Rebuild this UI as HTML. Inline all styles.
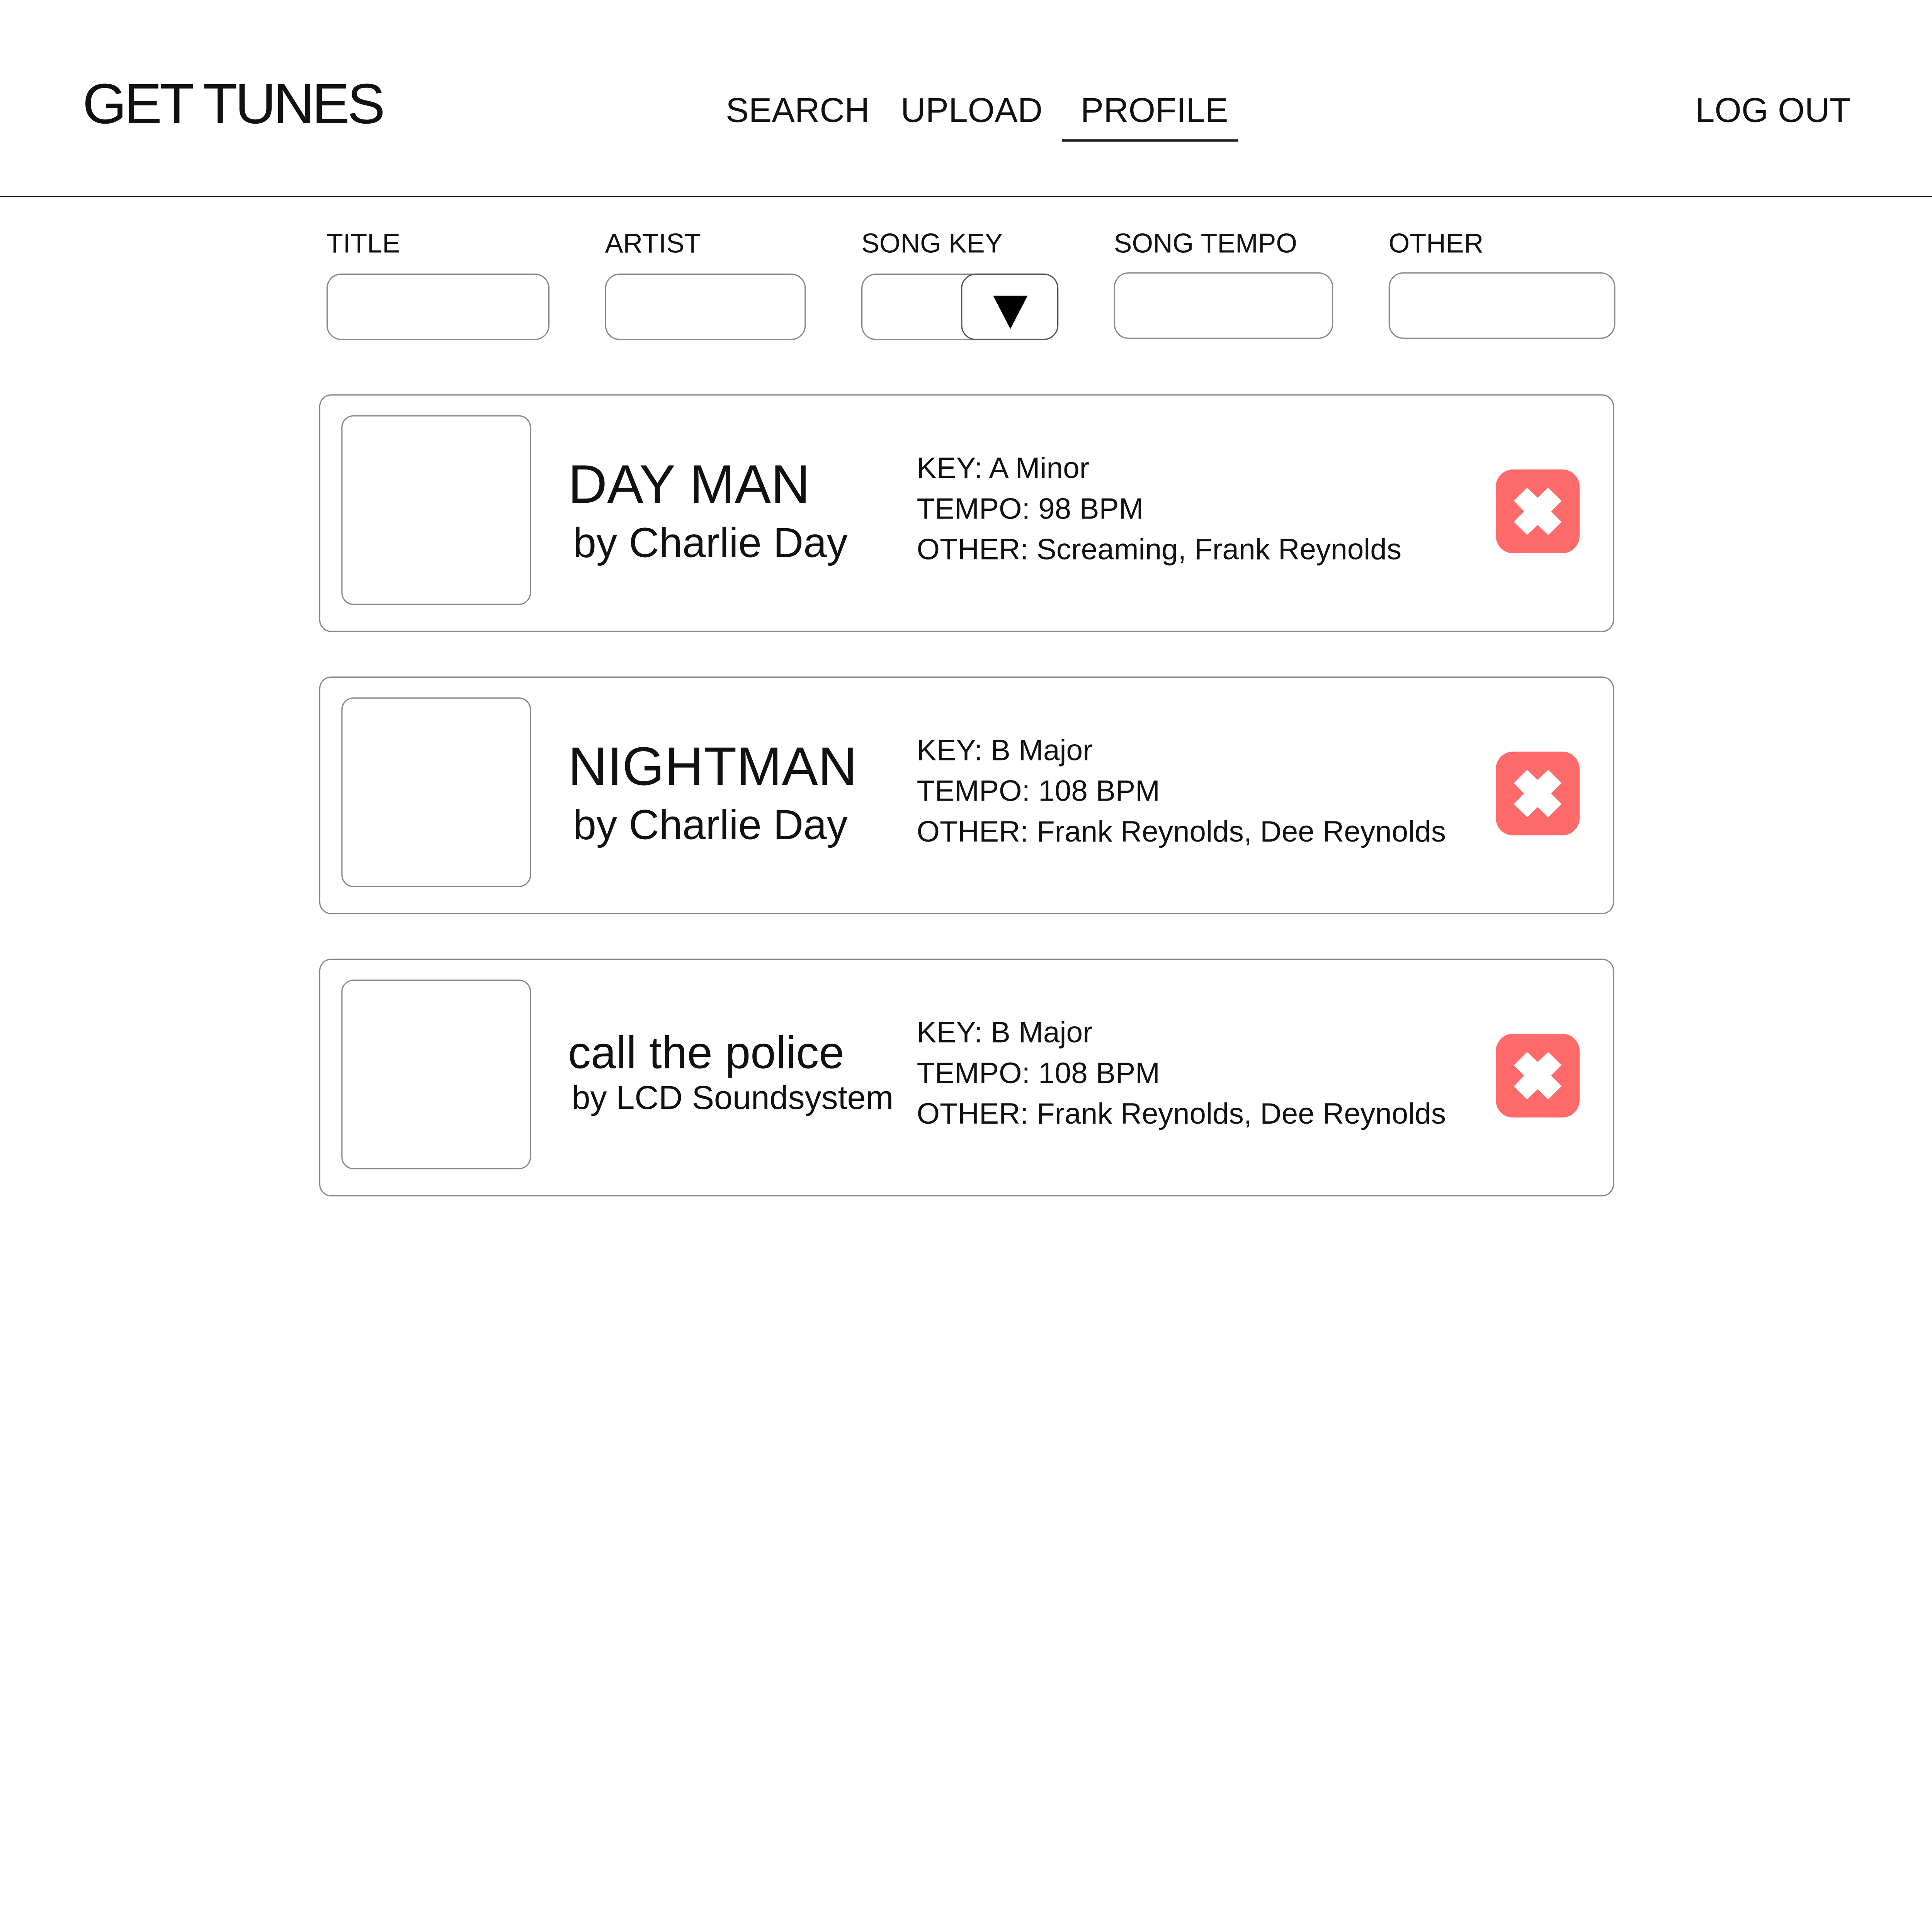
<!DOCTYPE html>
<html><head><meta charset="utf-8"><style>
html,body{margin:0;padding:0;background:#fff;overflow:hidden;width:100%;height:100%;}
#w{position:absolute;left:0;top:0;width:1568px;height:1510px;transform:scale(3.1888);transform-origin:0 0;font-family:"Liberation Sans",sans-serif;color:#111;}
.t{position:absolute;line-height:1;white-space:nowrap;}
.box{position:absolute;border:1.2px solid #888;border-radius:12px;box-sizing:border-box;background:#fff;}
.card{position:absolute;left:259px;width:1051px;height:193px;border:1.2px solid #888;border-radius:10px;box-sizing:border-box;}
.thumb{position:absolute;left:17px;top:16px;width:154px;height:154px;border:1.2px solid #888;border-radius:10px;box-sizing:border-box;}
.det{position:absolute;left:484px;top:43px;font-size:24px;line-height:33px;white-space:nowrap;}
.x{position:absolute;left:954px;top:60px;width:68px;height:68px;}
</style></head><body><div id="w">
<div class="t" style="left:67px;top:61px;font-size:46px;letter-spacing:-2px;">GET TUNES</div>
<div class="t" style="left:589px;top:76px;font-size:28px;">SEARCH</div>
<div class="t" style="left:731px;top:76px;font-size:28px;">UPLOAD</div>
<div class="t" style="left:877px;top:76px;font-size:28px;">PROFILE</div>
<div style="position:absolute;left:862px;top:113px;width:143px;height:1.5px;background:#222;"></div>
<div class="t" style="left:1376px;top:76px;font-size:28px;">LOG OUT</div>
<div style="position:absolute;left:0;top:158.5px;width:1568px;height:1.5px;background:#111;"></div>

<div class="t" style="left:265px;top:187px;font-size:22px;">TITLE</div>
<div class="t" style="left:491px;top:187px;font-size:22px;">ARTIST</div>
<div class="t" style="left:699px;top:187px;font-size:22px;">SONG KEY</div>
<div class="t" style="left:904px;top:187px;font-size:22px;">SONG TEMPO</div>
<div class="t" style="left:1127px;top:187px;font-size:22px;">OTHER</div>
<div class="box" style="left:265px;top:222px;width:181px;height:54px;"></div>
<div class="box" style="left:491px;top:222px;width:163px;height:54px;"></div>
<div class="box" style="left:699px;top:222px;width:160px;height:54px;"></div>
<div class="box" style="left:780px;top:222px;width:79px;height:54px;border-color:#555;background:transparent;"></div>
<svg style="position:absolute;left:0;top:0" width="1568" height="300"><polygon points="806,240 834,240 820,267" fill="#000"/></svg>
<div class="box" style="left:904px;top:221px;width:178px;height:54px;"></div>
<div class="box" style="left:1127px;top:221px;width:184px;height:54px;"></div>

<div class="card" style="top:320px;">
<div class="thumb"></div>
<div class="t" style="left:201px;top:51px;font-size:44px;">DAY MAN</div>
<div class="t" style="left:205px;top:103px;font-size:34px;">by Charlie Day</div>
<div class="det">KEY: A Minor<br>TEMPO: 98 BPM<br>OTHER: Screaming, Frank Reynolds</div>
<svg class="x" viewBox="0 0 68 68"><rect width="68" height="68" rx="14" fill="#ff6b6b"/><polygon fill="#fff" points="25.4,14.8 34,23 42.5,14.8 53.3,25.5 44.9,34 53.3,42.6 42.5,53.2 34,45 25.4,53.2 14.7,42.6 23,34 14.7,25.5"/></svg>
</div>

<div class="card" style="top:549px;">
<div class="thumb"></div>
<div class="t" style="left:201px;top:51px;font-size:44px;">NIGHTMAN</div>
<div class="t" style="left:205px;top:103px;font-size:34px;">by Charlie Day</div>
<div class="det">KEY: B Major<br>TEMPO: 108 BPM<br>OTHER: Frank Reynolds, Dee Reynolds</div>
<svg class="x" viewBox="0 0 68 68"><rect width="68" height="68" rx="14" fill="#ff6b6b"/><polygon fill="#fff" points="25.4,14.8 34,23 42.5,14.8 53.3,25.5 44.9,34 53.3,42.6 42.5,53.2 34,45 25.4,53.2 14.7,42.6 23,34 14.7,25.5"/></svg>
</div>

<div class="card" style="top:778px;">
<div class="thumb"></div>
<div class="t" style="left:201px;top:56.5px;font-size:37px;">call the police</div>
<div class="t" style="left:204px;top:99px;font-size:27px;">by LCD Soundsystem</div>
<div class="det">KEY: B Major<br>TEMPO: 108 BPM<br>OTHER: Frank Reynolds, Dee Reynolds</div>
<svg class="x" viewBox="0 0 68 68"><rect width="68" height="68" rx="14" fill="#ff6b6b"/><polygon fill="#fff" points="25.4,14.8 34,23 42.5,14.8 53.3,25.5 44.9,34 53.3,42.6 42.5,53.2 34,45 25.4,53.2 14.7,42.6 23,34 14.7,25.5"/></svg>
</div>
</div>
<script>
(function(){var w=window.innerWidth||document.documentElement.clientWidth;if(w>100){document.getElementById('w').style.transform='scale('+(w/1568)+')';}})();
</script>
</body></html>
